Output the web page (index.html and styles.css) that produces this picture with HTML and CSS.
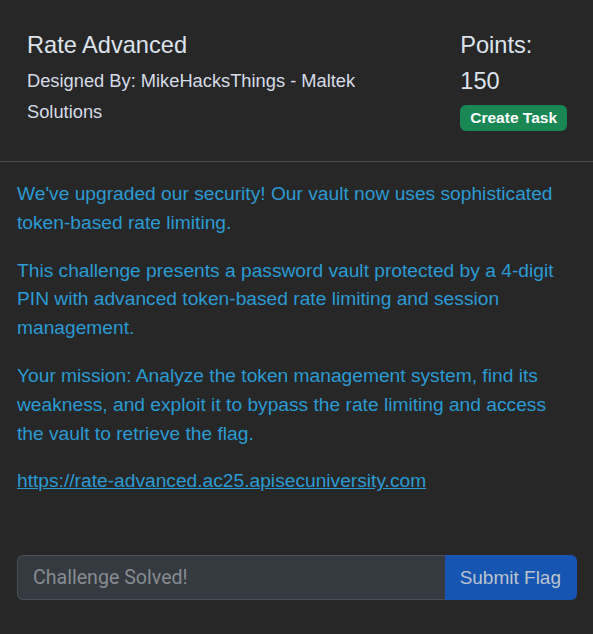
FILE: index.html
```html
<!DOCTYPE html>
<html lang="en">
<head>
<meta charset="utf-8">
<title>Rate Advanced</title>
<link rel="stylesheet" href="styles.css">
</head>
<body>
<div class="card">
  <div class="card-header">
    <div class="info">
      <h5 class="title">Rate Advanced</h5>
      <p class="author">Designed By: MikeHacksThings - Maltek Solutions</p>
    </div>
    <div class="points">
      <h5 class="points-label">Points:</h5>
      <div class="points-value">150</div>
      <button class="btn-task" type="button">Create Task</button>
    </div>
  </div>
  <div class="card-body">
    <p>We've upgraded our security! Our vault now uses sophisticated token-based rate limiting.</p>
    <p>This challenge presents a password vault protected by a 4-digit PIN with advanced token-based rate limiting and session management.</p>
    <p>Your mission: Analyze the token management system, find its weakness, and exploit it to bypass the rate limiting and access the vault to retrieve the flag.</p>
    <p><a href="#">https://rate-advanced.ac25.apisecuniversity.com</a></p>
    <form class="flag-form">
      <input class="flag-input" type="text" placeholder="Challenge Solved!" disabled>
      <button class="flag-submit" type="button" disabled>Submit Flag</button>
    </form>
  </div>
</div>
</body>
</html>
```
FILE: styles.css
```css
html, body {
  margin: 0;
  padding: 0;
  background: #272727;
}
body {
  font-family: "Liberation Sans", Arial, sans-serif;
  font-size: 18px;
  line-height: 1.6;
  color: #dee2e6;
}
.card {
  background: #272727;
  min-height: 634px;
}
.card-header {
  display: grid;
  grid-template-columns: 1fr auto;
  column-gap: 32px;
  padding: 27px 26px 30px 27px;
  border-bottom: 1px solid #4a4a4a;
}
.title, .points-label {
  margin: 0;
  font-size: 23.6px;
  font-weight: 400;
  line-height: 36px;
  color: #dde3ec;
}
.author {
  margin: 2px 0 0;
  font-size: 18.3px;
  line-height: 31px;
  color: #d5dce8;
}
.points {
  display: flex;
  flex-direction: column;
  align-items: flex-start;
}
.points-value {
  font-size: 23.6px;
  line-height: 36px;
  color: #dde3ec;
}
.btn-task {
  margin-top: 6px;
  height: 26px;
  padding: 0 10px;
  border: none;
  border-radius: 6px;
  background: #198754;
  color: #fff;
  font-family: "Liberation Sans", Arial, sans-serif;
  font-weight: 700;
  font-size: 15.5px;
  line-height: 26px;
}
.card-body {
  padding: 18px 16px 18px 17px;
  color: #2a9bd4;
  font-size: 19.2px;
  line-height: 28.8px;
}
.card-body p {
  margin: 0 0 19px;
}
.card-body a {
  color: #2a9bd4;
  text-decoration: underline;
}
.flag-form {
  display: flex;
  margin-top: 59px;
  height: 45px;
}
.flag-input {
  flex: 1;
  min-width: 0;
  box-sizing: border-box;
  height: 45px;
  padding: 0 15px;
  background: #343a40;
  border: 1px solid #4a5057;
  border-right: none;
  border-radius: 6px 0 0 6px;
  font-family: Roboto, "Liberation Sans", sans-serif;
  font-size: 19.6px;
  color: #adb5bd;
}
.flag-input::placeholder {
  color: #878c92;
}
.flag-submit {
  box-sizing: border-box;
  height: 45px;
  padding: 0 16px 0 15px;
  border: none;
  border-radius: 0 6px 6px 0;
  background: #1655b2;
  color: #bcc3cd;
  font-family: "Liberation Sans", Arial, sans-serif;
  font-size: 19px;
}
```
